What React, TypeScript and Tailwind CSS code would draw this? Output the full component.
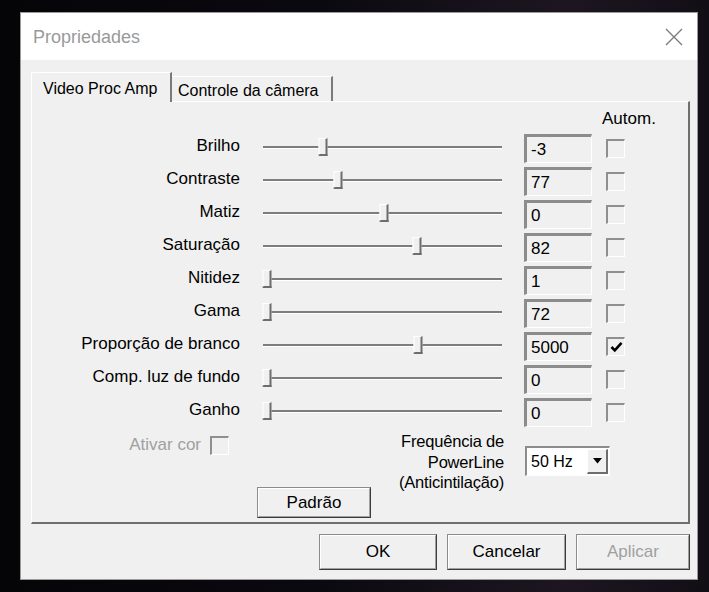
import React from "react";

const rows = [
  { label: "Brilho", value: "-3", pos: 60, auto: false },
  { label: "Contraste", value: "77", pos: 75, auto: false },
  { label: "Matiz", value: "0", pos: 121, auto: false },
  { label: "Saturação", value: "82", pos: 154, auto: false },
  { label: "Nitidez", value: "1", pos: 4, auto: false },
  { label: "Gama", value: "72", pos: 4, auto: false },
  { label: "Proporção de branco", value: "5000", pos: 155, auto: true },
  { label: "Comp. luz de fundo", value: "0", pos: 4, auto: false },
  { label: "Ganho", value: "0", pos: 4, auto: false },
];

const Checkbox = ({ checked }: { checked?: boolean }) => (
  <div className="w-[19px] h-[19px] border-t-2 border-l-2 border-t-[#8f8f8f] border-l-[#8f8f8f] border-b border-r border-b-white border-r-white bg-[#f0f0f0] flex items-center justify-center">
    {checked && (
      <svg width="13" height="12" viewBox="0 0 13 12">
        <path d="M1.5 6 L4.8 9.4 L11.5 1.8" fill="none" stroke="#000" strokeWidth="2.6" />
      </svg>
    )}
  </div>
);

const Slider = ({ pos }: { pos: number }) => (
  <div className="relative w-[239px] ml-[23px] mb-[3px]">
    <div className="h-[3px] border-t-2 border-t-[#7d7d7d] border-b border-b-white" />
    <div
      className="absolute top-[-8px] w-[9px] h-[18px] -translate-x-1/2 bg-[#f0f0f0] border-t border-l border-white border-r-2 border-b-2 border-r-[#6d6d6d] border-b-[#6d6d6d]"
      style={{ left: pos }}
    />
  </div>
);

const Button = ({ children, disabled, w, h }: { children: React.ReactNode; disabled?: boolean; w: string; h: string }) => (
  <div className={`${w} ${h} border border-[#8c8c8c] border-r-[#3c3c3c] border-b-[#3c3c3c] bg-[#f0f0f0] flex`}>
    <div
      className={`flex-1 flex items-center justify-center border-t border-l border-white border-r border-b border-r-[#a0a0a0] border-b-[#a0a0a0] text-[17px] ${
        disabled ? "text-[#a0a0a0]" : "text-black"
      }`}
    >
      {children}
    </div>
  </div>
);

export default function App() {
  return (
    <div
      className="w-[709px] h-[592px] overflow-hidden bg-[linear-gradient(90deg,#050407_0%,#0b0910_45%,#1d1620_80%,#120e16_100%)] pt-[12px] pl-[20px]"
      style={{ fontFamily: '"Liberation Sans", Arial, sans-serif' }}
    >
      <div className="w-[678px] h-[568px] bg-[#f0f0f0] flex flex-col border border-[#9a9a9a]">
        {/* title bar */}
        <div className="h-[47px] bg-white flex items-center justify-between pl-[12px] pr-[14px]">
          <span className="text-[18px] text-[#9a9a9a] mt-[1px]">Propriedades</span>
          <svg width="18" height="18" viewBox="0 0 18 18">
            <path d="M1 1 L17 17 M17 1 L1 17" stroke="#7a7a7a" strokeWidth="1.3" />
          </svg>
        </div>

        <div className="pl-[10px] pt-[12px]">
          {/* tabs */}
          <div className="flex items-end h-[29px]">
            <div className="relative z-10 h-[30px] -mb-[1px] w-[141px] bg-[#f0f0f0] border-t border-l border-white border-r-2 border-r-[#7a7a7a] rounded-tl-[2px] flex items-start pt-[4px] pl-[11px] text-[16px] text-black">
              Video Proc Amp
            </div>
            <div className="h-[25px] w-[161px] border-t border-white border-r-2 border-r-[#7a7a7a] flex items-start pt-[2px] pl-[6px] text-[16px] text-black">
              Controle da câmera
            </div>
          </div>

          {/* panel */}
          <div className="w-[659px] h-[423px] border-t border-l border-white border-r-2 border-b-2 border-r-[#6f6f6f] border-b-[#6f6f6f] flex flex-col">
            <div className="h-[30px] pt-[7px] pl-[570px] text-[17px] leading-[20px] text-black">Autom.</div>

            {rows.map((r) => (
              <div key={r.label} className="h-[33px] flex items-center">
                <div className="w-[208px] text-right text-[17px] text-black mb-[6px] whitespace-nowrap">{r.label}</div>
                <Slider pos={r.pos} />
                <div className="ml-[22px] w-[68px] h-[29px] border-t-[3px] border-l-[3px] border-t-[#8c8c8c] border-l-[#8c8c8c] border-b border-r border-b-white border-r-white flex items-center pl-[4px] text-[17px] text-black">
                  {r.value}
                </div>
                <div className="ml-[14px]">
                  <Checkbox checked={r.auto} />
                </div>
              </div>
            ))}

            {/* bottom area */}
            <div className="flex items-start flex-1">
              <div className="w-[197px] mt-[3px] flex items-center justify-end gap-[9px]">
                <span className="text-[17px] text-[#a0a0a0] mb-[2px]">Ativar cor</span>
                <Checkbox />
              </div>
              <div className="ml-[28px] mt-[58px]">
                <Button w="w-[114px]" h="h-[31px]">Padrão</Button>
              </div>
              <div className="w-[133px] mt-[2px] text-right text-[16.5px] leading-[20.5px] text-black tracking-[-0.2px]">
                Frequência de
                <br />
                PowerLine
                <br />
                (Anticintilação)
              </div>
              <div className="ml-[21px] mt-[17px] w-[85px] h-[30px] border-t-2 border-l-2 border-t-[#8c8c8c] border-l-[#8c8c8c] border-b border-r border-b-white border-r-white bg-white flex">
                <div className="flex-1 flex items-center pl-[4px] text-[16px] text-black">50 Hz</div>
                <div className="w-[21px] m-[1px] bg-[#f0f0f0] border-t border-l border-white border-r-2 border-b-2 border-r-[#6d6d6d] border-b-[#6d6d6d] flex items-center justify-center">
                  <svg width="9" height="6" viewBox="0 0 9 6">
                    <path d="M0 0 H9 L4.5 5.5 Z" fill="#000" />
                  </svg>
                </div>
              </div>
            </div>
          </div>
        </div>

        {/* dialog buttons */}
        <div className="flex justify-end gap-[10px] pr-[7px] mt-[10px]">
          <Button w="w-[118px]" h="h-[36px]">OK</Button>
          <Button w="w-[119px]" h="h-[36px]">Cancelar</Button>
          <Button w="w-[114px]" h="h-[36px]" disabled>
            Aplicar
          </Button>
        </div>
      </div>
    </div>
  );
}
